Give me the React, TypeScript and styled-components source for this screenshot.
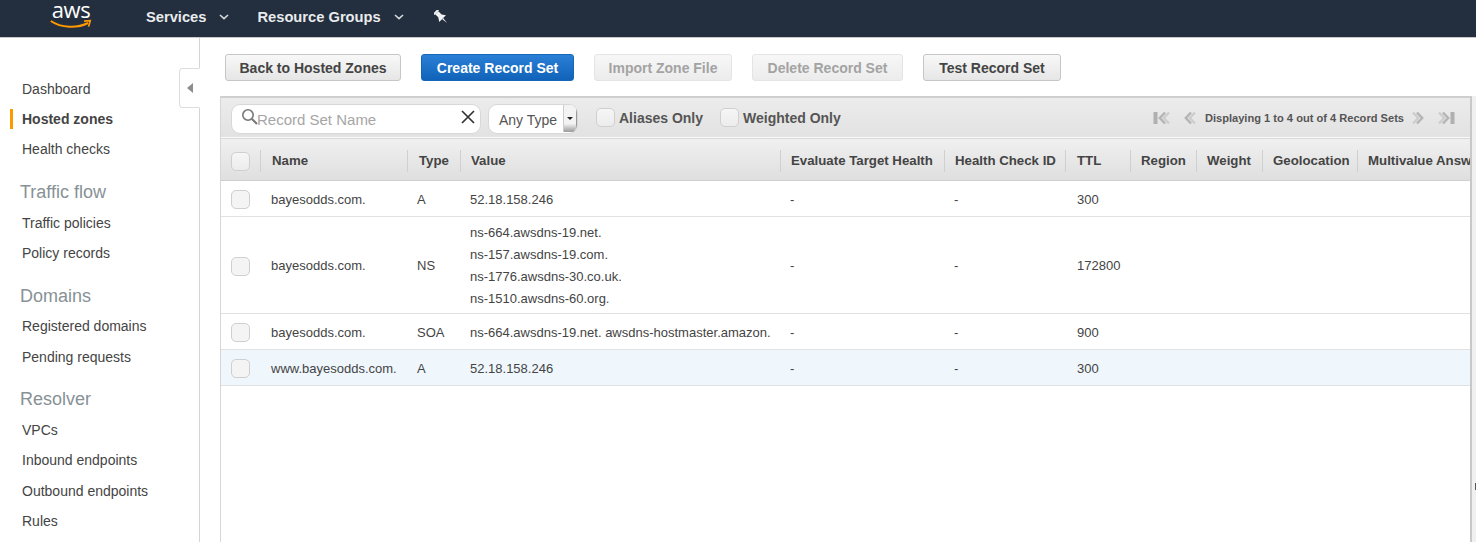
import React from "react";
import styled, { createGlobalStyle } from "styled-components";

const Global = createGlobalStyle`
  html, body { margin: 0; padding: 0; height: 100%; overflow: hidden; background: #fff; }
  body { font-family: "Liberation Sans", Arial, sans-serif; color: #444; }
  * { box-sizing: border-box; }
`;

const Page = styled.div`
  width: 1476px;
  height: 542px;
  display: flex;
  flex-direction: column;
  overflow: hidden;
`;

const TopBar = styled.header`
  height: 38px;
  flex: none;
  background: #232f3e;
  border-bottom: 1px solid #c9c9c9;
  display: flex;
  align-items: center;
  color: #eee;
  padding-left: 50px;
  padding-bottom: 3px;
`;

const Logo = styled.div`
  position: relative;
  align-self: flex-start;
  width: 42px;
  height: 30px;
  margin-right: 54px;
`;

const LogoText = styled.span`
  display: block;
  font-family: "Open Sans", "Liberation Sans", sans-serif;
  font-size: 22px;
  line-height: 18px;
  letter-spacing: -0.4px;
  color: #fff;
  text-align: center;
`;

const Smile = styled.svg`
  position: absolute;
  left: 0;
  top: 19px;
`;

const NavItem = styled.div`
  display: flex;
  align-items: center;
  font-size: 14.7px;
  font-weight: 700;
  margin-right: 28px;
  color: #e9ebed;
`;

const Chevron = styled.svg`
  margin-left: 13px;
`;

const PinHolder = styled.div`
  margin-left: 2px;
  display: flex;
`;

const Body = styled.div`
  flex: 1;
  display: flex;
  min-height: 0;
`;

const Sidebar = styled.nav`
  width: 200px;
  flex: none;
  border-right: 1px solid #d5d5d5;
  padding-top: 36px;
  position: relative;
`;

const Collapse = styled.div`
  position: absolute;
  right: -1px;
  top: 30px;
  width: 21px;
  height: 40px;
  background: #fff;
  border: 1px solid #ddd;
  border-right: 1px solid #fff;
  border-radius: 4px 0 0 4px;
  display: flex;
  align-items: center;
  justify-content: center;
`;

const NavLink = styled.div<{ $active?: boolean; $tall?: boolean }>`
  height: ${(p) => (p.$tall ? 31 : 30)}px;
  line-height: 30px;
  padding-left: 22px;
  font-size: 14px;
  color: #444;
  font-weight: ${(p) => (p.$active ? 700 : 400)};
  position: relative;
  &::before {
    content: "";
    display: ${(p) => (p.$active ? "block" : "none")};
    position: absolute;
    left: 10px;
    top: 5px;
    width: 3px;
    height: 20px;
    background: #ff9900;
  }
`;

const NavHeading = styled.div<{ $top: number; $bottom: number }>`
  font-size: 18px;
  color: #879196;
  padding-left: 20px;
  height: 30px;
  line-height: 30px;
  margin-top: ${(p) => p.$top}px;
  margin-bottom: ${(p) => p.$bottom}px;
`;

const Main = styled.main`
  flex: 1;
  min-width: 0;
  padding: 16px 0 0 20px;
`;

const Gutter = styled.div`
  width: 4px;
  flex: none;
  margin-top: 58px;
  background: #f0f0f0;
  position: relative;
`;

const GutterTick = styled.div`
  position: absolute;
  right: 0;
  top: 387px;
  width: 1px;
  height: 7px;
  background: #555;
`;

const Actions = styled.div`
  display: flex;
  padding-left: 5px;
  height: 27px;
  margin-bottom: 15px;
`;

const ActionButton = styled.div<{ $kind?: "primary" | "disabled"; $w: number; $gap: number }>`
  width: ${(p) => p.$w}px;
  margin-right: ${(p) => p.$gap}px;
  height: 27px;
  border-radius: 3px;
  display: flex;
  align-items: center;
  justify-content: center;
  font-size: 14px;
  font-weight: 700;
  border: 1px solid
    ${(p) => (p.$kind === "primary" ? "#1565b8" : p.$kind === "disabled" ? "#e4e4e4" : "#c6c6c6")};
  color: ${(p) => (p.$kind === "primary" ? "#fff" : p.$kind === "disabled" ? "#a3a3a3" : "#444")};
  background: ${(p) =>
    p.$kind === "primary"
      ? "linear-gradient(#2a7fd6, #1063b8)"
      : p.$kind === "disabled"
        ? "linear-gradient(#f7f7f7, #ececec)"
        : "linear-gradient(#f8f8f8, #e6e6e6)"};
`;

const Panel = styled.section`
  height: 460px;
  border: 1px solid #d6d6d6;
  border-top: 2px solid #cfcfcf;
  border-right: 2px solid #c8c8c8;
  overflow: hidden;
  background: #fff;
`;

const Toolbar = styled.div`
  height: 40px;
  display: flex;
  align-items: center;
  background: linear-gradient(#ececec, #e2e2e2);
  border-bottom: 1px solid #fafafa;
  padding-left: 10px;
  box-shadow: 0 1px 0 #d8d8d8;
`;

const SearchBox = styled.div`
  width: 250px;
  height: 30px;
  margin-top: 2px;
  background: #fff;
  border: 1px solid #d8d8d8;
  border-radius: 9px;
  display: flex;
  align-items: center;
  padding-left: 9px;
  padding-right: 4px;
  font-size: 15px;
  color: #a6a6a6;
`;

const SearchIcon = styled.svg`
  margin-top: -4px;
  flex: none;
`;

const ClearIcon = styled.svg`
  margin-top: -3px;
  flex: none;
`;

const SearchText = styled.span`
  flex: 1;
  margin-left: -2px;
  padding-top: 2px;
`;

const TypeSelect = styled.div`
  width: 90px;
  height: 30px;
  margin-top: 2px;
  margin-left: 7px;
  background: #fff;
  border: 1px solid #d8d8d8;
  border-radius: 9px;
  display: flex;
  align-items: center;
  justify-content: space-between;
  padding-left: 10px;
  font-size: 14px;
  color: #555;
  overflow: hidden;
`;

const TypeLabel = styled.span`
  padding-top: 2px;
`;

const SelectArrow = styled.div`
  width: 14px;
  height: 28px;
  background: linear-gradient(#f3f3f3 70%, #999);
  border-left: 1px solid #ccc;
  border-right: 1px solid #999;
  display: flex;
  align-items: center;
  justify-content: center;
  margin-top: -1px;
  &::after {
    content: "";
    border: 3px solid transparent;
    border-top: 3px solid #222;
    margin-top: 3px;
  }
`;

const Check = styled.div<{ $light?: boolean }>`
  width: 19px;
  height: 19px;
  flex: none;
  border: 1px solid #cfcfcf;
  border-radius: 5px;
  background: ${(p) => (p.$light ? "#f4f4f4" : "linear-gradient(#f6f6f6, #ececec)")};
`;

const Filter = styled.div<{ $first?: boolean }>`
  display: flex;
  align-items: center;
  gap: 4px;
  font-size: 14px;
  font-weight: 700;
  color: #555;
  margin-left: ${(p) => (p.$first ? "18px" : "17px")};
`;

const Pager = styled.div`
  margin-left: auto;
  display: flex;
  align-items: center;
  font-size: 11.1px;
  font-weight: 700;
  color: #555;
  padding-right: 15px;
`;

const PagerLabel = styled.span`
  margin: 0 8px 0 9px;
`;

const PagerIcon = styled.svg<{ $gap: number }>`
  margin-right: ${(p) => p.$gap}px;
  flex: none;
`;

const Row = styled.div<{ $highlight?: boolean; $h: number }>`
  display: grid;
  grid-template-columns: 39px 147px 53px 320px 164px 121px 65px 66px 66px 95px 130px;
  width: 1260px;
  height: ${(p) => p.$h}px;
  padding-top: 2px;
  align-items: center;
  border-bottom: 1px solid #e1e1e1;
  background: ${(p) => (p.$highlight ? "#eff7fd" : "#fff")};
  font-size: 13px;
  color: #444;
`;

const HeaderRow = styled(Row)`
  background: linear-gradient(#f0f0f0, #dfdfdf);
  border-bottom: 1px solid #cfcfcf;
  margin-top: 1px;
  padding-top: 3px;
`;

const HeadCell = styled.div<{ $pad: number }>`
  height: 22px;
  line-height: 22px;
  padding-left: ${(p) => p.$pad}px;
  border-left: 1px solid #d0d0d0;
  font-size: 13.25px;
  font-weight: 700;
  color: #444;
  white-space: nowrap;
  overflow: hidden;
`;

const CheckCell = styled.div`
  padding-left: 10px;
  display: flex;
  align-items: center;
`;

const Cell = styled.div<{ $pad: number }>`
  padding-left: ${(p) => p.$pad}px;
  line-height: 22px;
  white-space: nowrap;
  overflow: hidden;
`;

const Pin = () => (
  <svg width="14" height="14" viewBox="0 0 14 14" fill="#f2f3f4">
    <g transform="rotate(-45 7 7)">
      <rect x="3.8" y="-1" width="6.4" height="2" rx="0.5" />
      <rect x="4.8" y="1" width="4.4" height="5" />
      <path d="M4.8 5.5 H9.2 L11.8 9.2 H2.2 Z" />
      <path d="M6.2 9.2 H7.8 L7 15.5 Z" />
    </g>
  </svg>
);

const Caret = () => (
  <Chevron width="10" height="6" viewBox="0 0 10 6" fill="none" stroke="#d5d8db" strokeWidth="1.6">
    <path d="M1 1 L5 4.6 L9 1" />
  </Chevron>
);

const Dbl = ({ dir, bar, gap }: { dir: "l" | "r"; bar?: boolean; gap: number }) => (
  <PagerIcon $gap={gap} width={bar ? 17 : 12} height="14" viewBox={bar ? "0 0 17 14" : "0 0 12 14"} fill="none">
    <g transform={dir === "r" ? `translate(${bar ? 17 : 12} 0) scale(-1 1)` : undefined}>
      {bar && <rect x="0.5" y="1" width="4" height="12" fill="#b0b0b0" />}
      <g transform={bar ? "translate(5 0)" : undefined}>
        <path d="M7 1.5 L1.8 7 L7 12.5" stroke="#b4b4b4" strokeWidth="2.4" />
        <path d="M11 1.5 L5.8 7 L11 12.5" stroke="#cdcdcd" strokeWidth="2.4" />
      </g>
    </g>
  </PagerIcon>
);

const columns: [string, number][] = [
  ["Name", 11],
  ["Type", 11],
  ["Value", 10],
  ["Evaluate Target Health", 10],
  ["Health Check ID", 10],
  ["TTL", 11],
  ["Region", 10],
  ["Weight", 10],
  ["Geolocation", 10],
  ["Multivalue Answer", 10],
];

type Rec = { name: string; type: string; value: string[]; ttl: string; h: number; hl?: boolean };
const records: Rec[] = [
  { name: "bayesodds.com.", type: "A", value: ["52.18.158.246"], ttl: "300", h: 36 },
  {
    name: "bayesodds.com.",
    type: "NS",
    value: ["ns-664.awsdns-19.net.", "ns-157.awsdns-19.com.", "ns-1776.awsdns-30.co.uk.", "ns-1510.awsdns-60.org."],
    ttl: "172800",
    h: 97,
  },
  { name: "bayesodds.com.", type: "SOA", value: ["ns-664.awsdns-19.net. awsdns-hostmaster.amazon."], ttl: "900", h: 36 },
  { name: "www.bayesodds.com.", type: "A", value: ["52.18.158.246"], ttl: "300", h: 36, hl: true },
];

export default function App() {
  return (
    <Page>
      <Global />
      <TopBar>
        <Logo>
          <LogoText>aws</LogoText>
          <Smile width="42" height="11" viewBox="0 0 42 11" fill="none">
            <path d="M0.8 2 C11 9 27 9.5 38 4" stroke="#ff9900" strokeWidth="2" />
            <path d="M34 2.2 L40.2 1.6 L38.6 7.6" stroke="#ff9900" strokeWidth="1.7" />
          </Smile>
        </Logo>
        <NavItem>Services<Caret /></NavItem>
        <NavItem>Resource Groups<Caret /></NavItem>
        <PinHolder><Pin /></PinHolder>
      </TopBar>
      <Body>
        <Sidebar>
          <Collapse>
            <svg width="6" height="10" viewBox="0 0 6 10"><path d="M6 0 V10 L0 5 Z" fill="#8d8d8d" /></svg>
          </Collapse>
          <NavLink>Dashboard</NavLink>
          <NavLink $active>Hosted zones</NavLink>
          <NavLink>Health checks</NavLink>
          <NavHeading $top={13} $bottom={1}>Traffic flow</NavHeading>
          <NavLink>Traffic policies</NavLink>
          <NavLink>Policy records</NavLink>
          <NavHeading $top={13} $bottom={0}>Domains</NavHeading>
          <NavLink $tall>Registered domains</NavLink>
          <NavLink>Pending requests</NavLink>
          <NavHeading $top={12} $bottom={1}>Resolver</NavHeading>
          <NavLink>VPCs</NavLink>
          <NavLink $tall>Inbound endpoints</NavLink>
          <NavLink>Outbound endpoints</NavLink>
          <NavLink>Rules</NavLink>
        </Sidebar>
        <Main>
          <Actions>
            <ActionButton $w={176} $gap={20}>Back to Hosted Zones</ActionButton>
            <ActionButton $kind="primary" $w={153} $gap={20}>Create Record Set</ActionButton>
            <ActionButton $kind="disabled" $w={138} $gap={20}>Import Zone File</ActionButton>
            <ActionButton $kind="disabled" $w={151} $gap={20}>Delete Record Set</ActionButton>
            <ActionButton $w={138} $gap={0}>Test Record Set</ActionButton>
          </Actions>
          <Panel>
            <Toolbar>
              <SearchBox>
                <SearchIcon width="18" height="18" viewBox="0 0 18 18" fill="none">
                  <circle cx="7" cy="7" r="5.2" stroke="#777" strokeWidth="1.6" />
                  <path d="M11 11 L16 16" stroke="#777" strokeWidth="2.2" />
                </SearchIcon>
                <SearchText>Record Set Name</SearchText>
                <ClearIcon width="16" height="16" viewBox="0 0 16 16" fill="none" stroke="#333" strokeWidth="1.7">
                  <path d="M2 2 L14 14 M14 2 L2 14" />
                </ClearIcon>
              </SearchBox>
              <TypeSelect>
                <TypeLabel>Any Type</TypeLabel>
                <SelectArrow />
              </TypeSelect>
              <Filter $first><Check />Aliases Only</Filter>
              <Filter><Check />Weighted Only</Filter>
              <Pager>
                <Dbl dir="l" bar gap={14} />
                <Dbl dir="l" gap={0} />
                <PagerLabel>Displaying 1 to 4 out of 4 Record Sets</PagerLabel>
                <Dbl dir="r" gap={14} />
                <Dbl dir="r" bar gap={0} />
              </Pager>
            </Toolbar>
            <HeaderRow $h={42}>
              <CheckCell><Check /></CheckCell>
              {columns.map(([c, pad]) => <HeadCell key={c} $pad={pad}>{c}</HeadCell>)}
            </HeaderRow>
            {records.map((r, i) => (
              <Row key={i} $h={r.h} $highlight={r.hl}>
                <CheckCell><Check $light /></CheckCell>
                <Cell $pad={11}>{r.name}</Cell>
                <Cell $pad={10}>{r.type}</Cell>
                <Cell $pad={10}>{r.value.map((v) => <div key={v}>{v}</div>)}</Cell>
                <Cell $pad={10}>-</Cell>
                <Cell $pad={10}>-</Cell>
                <Cell $pad={12}>{r.ttl}</Cell>
              </Row>
            ))}
          </Panel>
        </Main>
        <Gutter><GutterTick /></Gutter>
      </Body>
    </Page>
  );
}
